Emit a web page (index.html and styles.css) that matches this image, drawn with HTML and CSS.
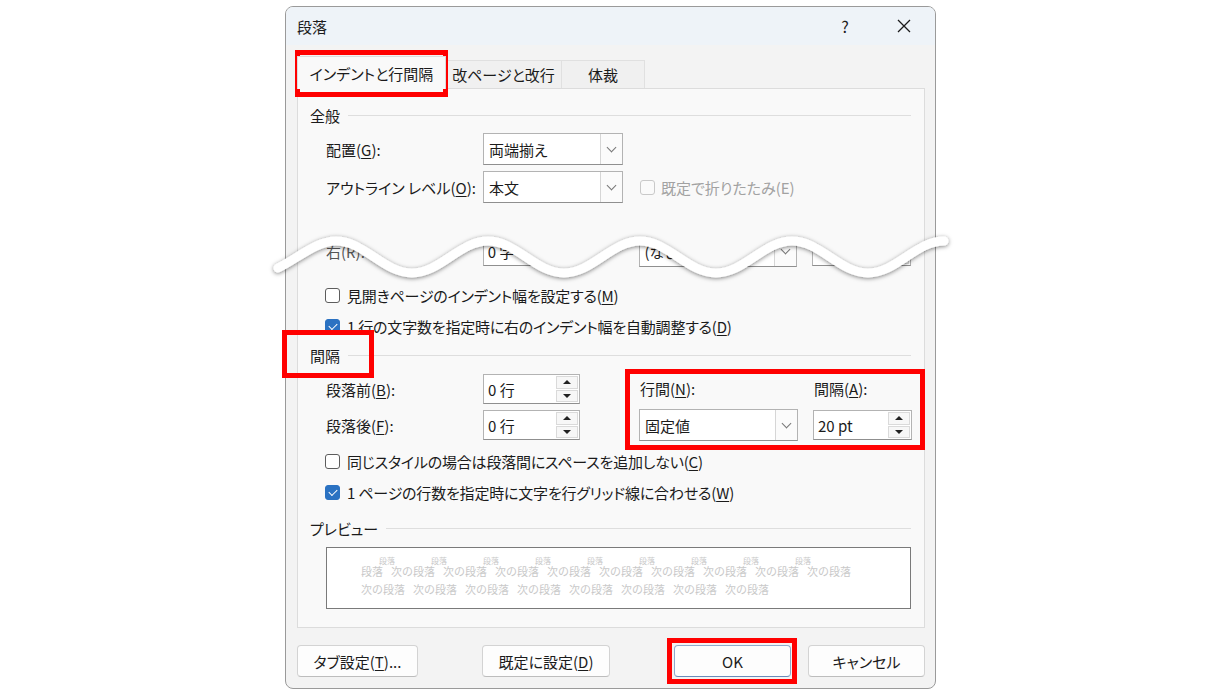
FILE: index.html
```html
<!DOCTYPE html>
<html lang="ja">
<head>
  <meta charset="UTF-8" />
  <title>段落</title>
  <link rel="stylesheet" href="styles.css">
</head>
<body>
  <div class="page">
    <div class="dialog">
      <div class="titlebar">
        <span class="title">段落</span>
        <span class="help">?</span>
        <span class="close">
          <svg width="14" height="14" viewBox="0 0 14 14"><path d="M1 1L13 13M13 1L1 13" stroke="#1b1b1b" stroke-width="1.3" fill="none"/></svg>
        </span>
      </div>

      <div class="body">
        <div class="tabs">
          <div class="tab active">インデントと行間隔</div>
          <div class="tab t2">改ページと改行</div>
          <div class="tab t3">体裁</div>
        </div>

        <div class="panel">
          <div class="group-title"><span>全般</span></div>
          <div class="row">
            <span class="lbl">配置(<u>G</u>):</span>
            <div class="combo w140"><span class="val">両端揃え</span><span class="drop"></span></div>
          </div>
          <div class="row">
            <span class="lbl">アウトライン レベル(<u>O</u>):</span>
            <div class="combo w140"><span class="val">本文</span><span class="drop"></span></div>
            <span class="cb off"></span><span class="cb-text disabled">既定で折りたたみ(E)</span>
          </div>

          <!-- インデントの行 (波線の下に一部だけ見える) -->
          <div class="cut">
            <div class="row">
              <span class="lbl faint">右(R):</span>
              <div class="spin w97"><span class="val">0 字</span><span class="arrows"><i class="up"></i><i class="down"></i></span></div>
              <div class="combo w159 ml59"><span class="val">(なし)</span><span class="drop"></span></div>
              <div class="spin w99 ml15"><span class="val"></span><span class="arrows"><i class="up"></i><i class="down"></i></span></div>
            </div>
          </div>

          <div class="check first">
            <span class="cb"></span><span class="cb-text">見開きページのインデント幅を設定する(<u>M</u>)</span>
          </div>
          <div class="check">
            <span class="cb on"></span><span class="cb-text">1 行の文字数を指定時に右のインデント幅を自動調整する(<u>D</u>)</span>
          </div>

          <div class="group-title gap-title"><span>間隔</span></div>
          <div class="spacing">
            <div class="sp-left">
              <div class="row r30">
                <span class="lbl">段落前(<u>B</u>):</span>
                <div class="spin w97"><span class="val">0 行</span><span class="arrows"><i class="up"></i><i class="down"></i></span></div>
              </div>
              <div class="row r30 next">
                <span class="lbl">段落後(<u>F</u>):</span>
                <div class="spin w97"><span class="val">0 行</span><span class="arrows"><i class="up"></i><i class="down"></i></span></div>
              </div>
            </div>
            <div class="sp-col line-col">
              <span class="sp-lbl">行間(<u>N</u>):</span>
              <div class="combo w159"><span class="val">固定値</span><span class="drop"></span></div>
            </div>
            <div class="sp-col at-col">
              <span class="sp-lbl">間隔(<u>A</u>):</span>
              <div class="spin w99 pt"><span class="val">20 pt</span><span class="arrows"><i class="up"></i><i class="down"></i></span></div>
            </div>
          </div>

          <div class="check after-sp">
            <span class="cb"></span><span class="cb-text">同じスタイルの場合は段落間にスペースを追加しない(<u>C</u>)</span>
          </div>
          <div class="check">
            <span class="cb on"></span><span class="cb-text">1 ページの行数を指定時に文字を行グリッド線に合わせる(<u>W</u>)</span>
          </div>

          <div class="group-title pv-title"><span>プレビュー</span></div>
          <div class="preview">
            <div class="pv-line">段落<span class="g"><b>段落</b></span>次の段落<span class="g"><b>段落</b></span>次の段落<span class="g"><b>段落</b></span>次の段落<span class="g"><b>段落</b></span>次の段落<span class="g"><b>段落</b></span>次の段落<span class="g"><b>段落</b></span>次の段落<span class="g"><b>段落</b></span>次の段落<span class="g"><b>段落</b></span>次の段落<span class="g"><b>段落</b></span>次の段落</div>
            <div class="pv-line second">
              <span>次の段落</span><span>次の段落</span><span>次の段落</span><span>次の段落</span><span>次の段落</span><span>次の段落</span><span>次の段落</span><span>次の段落</span>
            </div>
          </div>
        </div>

        <div class="buttons">
          <button class="btn b-tab">タブ設定(<u>T</u>)...</button>
          <button class="btn b-def">既定に設定(<u>D</u>)</button>
          <button class="btn b-ok">OK</button>
          <button class="btn b-cancel">キャンセル</button>
        </div>
      </div>
    </div>

    <!-- 省略部分の波線: 上側はパネルの地色で塗りつぶす -->
    <svg class="wave" width="1222" height="698" viewBox="0 0 1222 698">
      <defs>
        <clipPath id="panelArea"><rect x="298" y="212" width="626" height="72"/></clipPath>
        <filter id="waveShadow" x="-5%" y="-60%" width="110%" height="220%">
          <feDropShadow dx="0" dy="1" stdDeviation="2" flood-color="#000" flood-opacity="0.5"/>
        </filter>
      </defs>
      <path clip-path="url(#panelArea)" fill="#f9f9f9"
            d="M278 268 C297 259 316 241 336 241 C364 241 384 273 412 273 C440 273 460 241 488 241 C516 241 536 273 564 273 C592 273 612 241 640 241 C668 241 688 273 716 273 C744 273 764 241 792 241 C820 241 840 273 868 273 C896 273 916 241 944 241 L944 212 L278 212 Z"/>
      <path filter="url(#waveShadow)" fill="none" stroke="#fff" stroke-width="9" stroke-linecap="round"
            d="M278 268 C297 259 316 241 336 241 C364 241 384 273 412 273 C440 273 460 241 488 241 C516 241 536 273 564 273 C592 273 612 241 640 241 C668 241 688 273 716 273 C744 273 764 241 792 241 C820 241 840 273 868 273 C896 273 916 241 944 241"/>
    </svg>

    <!-- 赤枠 -->
    <div class="mark mark-tab"></div>
    <div class="mark mark-gap"></div>
    <div class="mark mark-line"></div>
    <div class="mark mark-ok"></div>
  </div>
</body>
</html>
```

FILE: styles.css
```css
* {
  box-sizing: border-box;
}

body {
  margin: 0;
  background: #ffffff;
  font-family: "Noto Sans CJK JP", "Noto Sans", sans-serif;
  font-size: 15px;
  color: #1b1b1b;
  font-feature-settings: "palt";
}

u {
  text-underline-offset: 2px;
}

.page {
  position: relative;
  width: 1222px;
  height: 698px;
  overflow: hidden;
}

.dialog {
  margin: 6px 0 0 285px;
  width: 651px;
  height: 683px;
  border: 1px solid #9a9a9a;
  border-radius: 8px;
  background: #f3f3f3;
  overflow: hidden;
}

/* title bar */
.titlebar {
  height: 38px;
  background: #eef3f8;
  display: flex;
  align-items: center;
  padding-left: 11px;
}

.title {
  flex: 1;
}

.help,
.close {
  width: 46px;
  display: flex;
  justify-content: center;
  align-items: center;
}

.help {
  font-size: 16px;
}

.close {
  margin: 0 8px 0 13px;
}

/* tabs */
.body {
  padding: 11px 10px 0 11px;
}

.tabs {
  display: flex;
  align-items: flex-end;
  height: 32px;
}

.tab {
  height: 28px;
  display: flex;
  align-items: center;
  justify-content: center;
  background: #f0f0f0;
  border: 1px solid #e0e0e0;
  border-bottom: none;
  margin-left: -1px;
}

.tab.active {
  width: 149px;
  height: 33px;
  margin-left: 0;
  margin-bottom: -1px;
  background: #f9f9f9;
  border-color: #dcdcdc;
  position: relative;
  z-index: 1;
}

.t2 { width: 117px; }
.t3 { width: 84px; }

.panel {
  height: 540px;
  background: #f9f9f9;
  border: 1px solid #dcdcdc;
  padding: 14px 13px 0 0;
}

.group-title {
  display: flex;
  align-items: center;
  height: 24px;
  padding-left: 12px;
}

.group-title::after {
  content: "";
  flex: 1;
  height: 1px;
  background: #dedede;
  margin-left: 8px;
}

.gap-title { margin-top: 2px; }
.pv-title { margin-top: 9px; }

/* form rows */
.row {
  display: flex;
  align-items: center;
  height: 32px;
  margin-top: 6px;
  padding-left: 28px;
}

.lbl {
  width: 157px;
  white-space: nowrap;
}

.faint {
  color: #555;
}

.combo,
.spin {
  display: flex;
  align-items: center;
  background: #ffffff;
  border: 1px solid #b3b3b3;
  border-bottom-color: #8f8f8f;
  padding-left: 5px;
}

.combo {
  height: 32px;
}

.spin {
  height: 30px;
  padding-left: 4px;
}

.val {
  flex: 1;
  white-space: nowrap;
}

.w140 { width: 140px; }
.w159 { width: 159px; }
.w97 { width: 97px; }
.w99 { width: 99px; }
.ml59 { margin-left: 59px; }
.ml15 { margin-left: 15px; }

.drop {
  width: 22px;
  align-self: stretch;
  border-left: 1px solid #d6d6d6;
  background: #fbfbfb;
  display: flex;
  align-items: center;
  justify-content: center;
}

.drop::before {
  content: "";
  width: 6px;
  height: 6px;
  border-right: 1px solid #777;
  border-bottom: 1px solid #777;
  transform: translateY(-2px) rotate(45deg);
}

.arrows {
  width: 22px;
  height: 26px;
  margin-right: 1px;
  display: flex;
  flex-direction: column;
  gap: 1px;
}

.arrows i {
  flex: 1;
  border: 1px solid #dadada;
  background: #f7f7f7;
  display: flex;
  align-items: center;
  justify-content: center;
}

.arrows i::before {
  content: "";
  border-left: 4px solid transparent;
  border-right: 4px solid transparent;
}

.arrows .up::before { border-bottom: 4px solid #222; }
.arrows .down::before { border-top: 4px solid #222; }

/* checkboxes */
.cb {
  width: 15px;
  height: 15px;
  flex: none;
  border: 1px solid #5d5d5d;
  border-radius: 3px;
  background: #ffffff;
}

.cb.on {
  background: #2b72c2;
  border-color: #2b72c2;
}

.cb.on::after {
  content: "";
  display: block;
  width: 7px;
  height: 4px;
  margin: 3px 0 0 3px;
  border-left: 1.5px solid #fff;
  border-bottom: 1.5px solid #fff;
  transform: rotate(-45deg);
}

.cb.off {
  margin-left: 17px;
  border-color: #c9c9c9;
  background: #fafafa;
}

.cb-text {
  margin-left: 7px;
  white-space: nowrap;
  letter-spacing: -0.2px;
}

.cb-text.disabled {
  margin-left: 6px;
  color: #a2a2a2;
  letter-spacing: 0;
}

.check {
  display: flex;
  align-items: center;
  height: 30px;
  margin-top: 1px;
  padding-left: 27px;
}

.check.first { margin-top: 13px; }
.check.after-sp { margin-top: 5px; }

/* indent row that is cut off by the wave */
.cut {
  height: 37px;
  margin-top: 27px;
  overflow: hidden;
}

.cut .row {
  margin-top: 5px;
}

/* spacing block */
.spacing {
  display: flex;
  margin-top: 7px;
  height: 67px;
}

.r30 {
  height: 30px;
  margin-top: 0;
}

.r30.next {
  margin-top: 6px;
}

.sp-col {
  display: flex;
  flex-direction: column;
}

.line-col { margin-left: 59px; }
.at-col { margin-left: 15px; }

.sp-lbl {
  height: 30px;
  line-height: 30px;
  padding-left: 1px;
  margin-bottom: 5px;
}

.spin.pt {
  margin-top: 1px;
}

/* preview */
.preview {
  margin: 7px 0 0 28px;
  height: 62px;
  background: #ffffff;
  border: 1px solid #7a7a7a;
  padding: 11px 0 0 34px;
  color: #c9c9c9;
  font-size: 11px;
  font-feature-settings: normal;
}

.pv-line {
  height: 17px;
  line-height: 17px;
  white-space: nowrap;
}

.pv-line .g {
  display: inline-block;
  width: 8px;
  height: 17px;
  position: relative;
}

.pv-line .g b {
  position: absolute;
  left: -4px;
  top: -7px;
  font-weight: normal;
  font-size: 8px;
}

.pv-line.second {
  margin-top: 5px;
}

.pv-line.second span {
  margin-right: 8px;
}

/* buttons */
.buttons {
  display: flex;
  margin-top: 17px;
}

.btn {
  height: 32px;
  font: inherit;
  color: #1b1b1b;
  background: #fdfdfd;
  border: 1px solid #d3d3d3;
  border-bottom-color: #bdbdbd;
  border-radius: 4px;
  padding: 0;
}

.b-tab { width: 121px; }
.b-def { width: 128px; margin-left: 64px; }
.b-ok {
  width: 117px;
  margin-left: 64px;
  border-color: #8fa9cc;
  border-bottom-color: #6a8cbb;
}
.b-cancel { width: 117px; margin-left: 17px; }

/* annotations */
.wave {
  position: absolute;
  left: 0;
  top: 0;
  pointer-events: none;
}

.mark {
  position: absolute;
  border: 5px solid #f00;
}

.mark-tab {
  left: 295px;
  top: 50px;
  width: 153px;
  height: 47px;
}

.mark-gap {
  left: 282px;
  top: 330px;
  width: 92px;
  height: 48px;
}

.mark-line {
  left: 625px;
  top: 369px;
  width: 300px;
  height: 81px;
}

.mark-ok {
  left: 667px;
  top: 638px;
  width: 130px;
  height: 46px;
}
```
